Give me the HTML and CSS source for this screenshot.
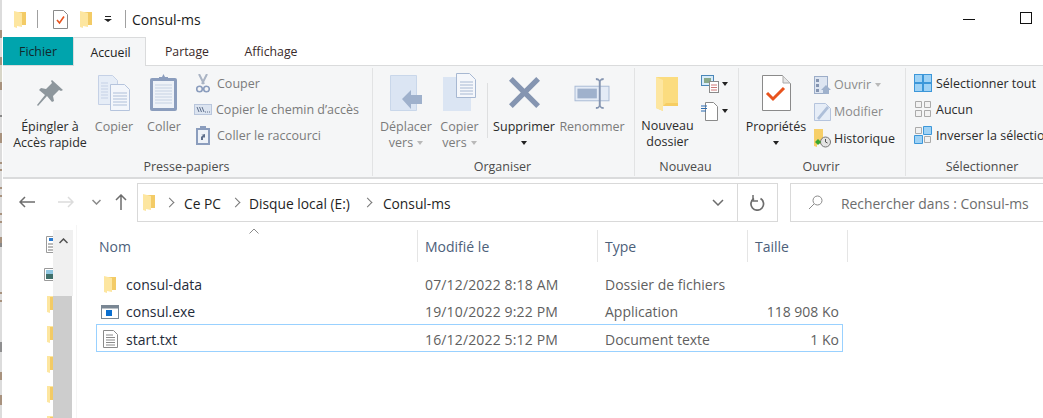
FILE: index.html
```html
<!DOCTYPE html>
<html lang="fr">
<head>
<meta charset="utf-8">
<title>Consul-ms</title>
<link rel="stylesheet" href="styles.css">
</head>
<body>
<div class="window">
  <header class="titlebar">
    <svg class="qa-folder" width="12" height="17" viewBox="0 0 12 17"><path d="M2 1h10v13H2z" fill="#f3cb66"/><path d="M0 0l8 2v14l-5-1v2l-3-1z" fill="#fde6a0"/></svg>
    <i class="qa-sep"></i>
    <svg class="qa-doc" width="15" height="19" viewBox="0 0 15 19"><path d="M.5.5h10l4 4v14H.5z" fill="#fff" stroke="#8a8a8a"/><path d="M4 10l2.500 3L11 6.500" fill="none" stroke="#e8531d" stroke-width="1.600"/></svg>
    <svg class="qa-folder2" width="12" height="17" viewBox="0 0 12 17"><path d="M2 1h10v13H2z" fill="#f3cb66"/><path d="M0 0l8 2v14l-5-1v2l-3-1z" fill="#fde6a0"/></svg>
    <svg class="qa-down" width="8" height="6" viewBox="0 0 8 6"><path d="M1 0h6v1H1zM0 3h8L4 6z" fill="#222"/></svg>
    <i class="qa-sep qa-sep2"></i>
    <span class="title">Consul-ms</span>
    <span class="win-min"></span>
    <span class="win-max"></span>
  </header>

  <nav class="tabs">
    <span class="tab tab-file">Fichier</span>
    <span class="tab tab-active">Accueil</span>
    <span class="tab tab-share">Partage</span>
    <span class="tab tab-view">Affichage</span>
  </nav>

  <section class="ribbon">
    <div class="group g-clip">
      <div class="group-body">
        <div class="big b-pin">
          <svg width="26" height="26" viewBox="0 0 26 26"><path d="M15 0l11 10-2 1-2-1-6 6 1 5-2 1-5-6-9 10-1-1 8-10-6-5 2-2 5 1 6-6-1-2z" fill="#8e979d"/></svg>
          <span class="dark">Épingler à<br>Accès rapide</span>
        </div>
        <div class="big b-copy">
          <svg width="32" height="36" viewBox="0 0 32 36"><path d="M.5.500h14l5 5v24H.5z" fill="#e6edf7" stroke="#c5d1e6"/><path d="M12.500 9.500h14l5 5v21h-19z" fill="#f3f6fb" stroke="#b5c4dd"/><path d="M15 18h14M15 21h14M15 24h14M15 27h14M15 30h14" stroke="#aebfd9"/><path d="M3 8h7M3 11h7M3 14h7M3 17h7M3 20h7M3 23h7" stroke="#c5d1e6"/></svg>
          <span>Copier</span>
        </div>
        <div class="big b-paste">
          <svg width="28" height="37" viewBox="0 0 28 37"><rect x="0" y="4" width="27" height="33" rx="2" fill="#8b9dbd"/><rect x="3" y="7" width="21" height="27" fill="#eef2f8"/><path d="M5 11h17M5 14h17M5 17h17M5 20h17M5 23h17M5 26h17M5 29h17" stroke="#c6d2e3"/><path d="M9 7V3h3l1.500-3L15 3h3v4z" fill="#8b9dbd"/></svg>
          <span>Coller</span>
        </div>
        <ul class="small-list s-clip">
          <li><svg width="14" height="19" viewBox="0 0 14 19"><path d="M3 0l5 10M11 0L6 10" stroke="#aab4c4" stroke-width="2" fill="none"/><circle cx="3.500" cy="15" r="2.800" fill="none" stroke="#8b9dbd" stroke-width="1.600"/><circle cx="10.500" cy="15" r="2.800" fill="none" stroke="#8b9dbd" stroke-width="1.600"/></svg>Couper</li>
          <li><svg width="18" height="11" viewBox="0 0 18 11"><rect x=".5" y=".5" width="17" height="10" fill="#dce4f0" stroke="#b9c6dc"/><path d="M3 3l2 5M5.500 3l2 5M8 3l2 5" stroke="#5e6f8c" fill="none"/><path d="M11 8h1M13 8h1M15 8h1" stroke="#5e6f8c"/></svg>Copier le chemin d’accès</li>
          <li><svg width="14" height="19" viewBox="0 0 14 19"><rect y="2" width="14" height="17" fill="#8b9dbd"/><rect x="2" y="4" width="10" height="13" fill="#eef2f8"/><rect x="4" width="6" height="4" fill="#8b9dbd"/><path d="M5 14v-3l2-2H5l4-1v4l-1-1-1 1v2z" fill="#5e6f8c"/></svg>Coller le raccourci</li>
        </ul>
      </div>
      <div class="group-label">Presse-papiers</div>
    </div>

    <div class="group g-org">
      <div class="group-body">
        <div class="big b-move">
          <svg width="33" height="36" viewBox="0 0 33 36"><path d="M.5.500h26v35H.5z" fill="#dbe5f3" stroke="#c9d7ea"/><path d="M12 24l9-9v5h11v9H21v5z" fill="#9fb1cc"/></svg>
          <span>Déplacer<br>vers<em class="caret-l"></em></span>
        </div>
        <div class="big b-copyto">
          <svg width="33" height="38" viewBox="0 0 33 38"><path d="M0 4h28v34H0z" fill="#dbe5f3"/><path d="M13.500.500h13l6 6v18h-19z" fill="#f5f7fb" stroke="#a7b8d2"/><path d="M17 9h13M17 12h13M17 15h13M17 18h13M17 21h13" stroke="#a7b8d2"/></svg>
          <span>Copier<br>vers<em class="caret-l"></em></span>
        </div>
        <i class="vsep"></i>
        <div class="big b-del">
          <svg width="31" height="31" viewBox="0 0 33 33"><path d="M4 0l12.500 12.500L29 0l4 4-12.500 12.500L33 29l-4 4-12.500-12.500L4 33l-4-4 12.500-12.500L0 4z" fill="#8595b1"/></svg>
          <span class="dark">Supprimer<em class="caret-d block"></em></span>
        </div>
        <div class="big b-ren">
          <svg width="36" height="33" viewBox="0 0 36 34"><rect x=".5" y="9.500" width="35" height="15" fill="#e4ebf6" stroke="#a9bad4"/><rect x="3" y="12" width="20" height="10" fill="#9fb1cc"/><path d="M22 1q3 0 4 2 1-2 4-2v2q-3 0-3 2v24q0 2 3 2v2q-3 0-4-2-1 2-4 2v-2q3 0 3-2V5q0-2-3-2z" fill="#8595b1"/></svg>
          <span>Renommer</span>
        </div>
      </div>
      <div class="group-label">Organiser</div>
    </div>

    <div class="group g-new">
      <div class="group-body">
        <div class="big b-newf">
          <svg width="24" height="35" viewBox="0 0 24 35"><path d="M0 1h22v29H7v5L0 32z" fill="#fbdc7f"/><path d="M22 1v29H7l3-3h12z" fill="#f6cd62"/><path d="M0 1l7 3v31l-7-3z" fill="#fde6a0"/></svg>
          <span class="dark">Nouveau<br>dossier</span>
        </div>
        <div class="mini-col">
          <div class="mini"><svg width="18" height="18" viewBox="0 0 18 18"><rect x=".5" y=".5" width="12" height="10" fill="#d8ecfa" stroke="#4b87b8"/><rect x="3" y="3" width="7" height="5" fill="#8aa98a"/><rect x="8.500" y="6.500" width="9" height="11" fill="#fff" stroke="#8a8a8a"/><path d="M10 10h6M10 12.500h6M10 15h6" stroke="#c77"/></svg><em class="caret-d"></em></div>
          <div class="mini"><svg width="18" height="20" viewBox="0 0 18 20"><path d="M4.500 1.500h8l4 4v14h-12z" fill="#fff" stroke="#8a8a8a"/><path d="M0 5h6M0 7.500h6M0 10h5" stroke="#2a6bb0"/></svg><em class="caret-d"></em></div>
        </div>
      </div>
      <div class="group-label">Nouveau</div>
    </div>

    <div class="group g-open">
      <div class="group-body">
        <div class="big b-prop">
          <svg width="29" height="36" viewBox="0 0 29 36"><path d="M.5.500h20l8 8v27H.5z" fill="#fff" stroke="#8a8a8a"/><path d="M21 1v7h7" fill="#e6e6e6" stroke="#aaa"/><path d="M5 18l6 6 11-11" fill="none" stroke="#e8531d" stroke-width="3"/></svg>
          <span class="dark">Propriétés<em class="caret-d block"></em></span>
        </div>
        <ul class="small-list s-open">
          <li><svg width="17" height="18" viewBox="0 0 17 18"><rect x=".5" y=".5" width="13" height="17" fill="#dde5f1" stroke="#9cadc8"/><path d="M2 3h3v3H2zM2 8h3v3H2zM2 13h3v3H2z" fill="#8595b1"/><path d="M12 9l5 5h-2v4h-6v-4H7z" fill="#9fb1cc"/></svg><span class="muted">Ouvrir<em class="caret-l"></em></span></li>
          <li><svg width="17" height="18" viewBox="0 0 17 18"><path d="M.5.500h11l5 5v12H.5z" fill="#e6edf7" stroke="#b5c4dd"/><path d="M3 15L13 3l2 2L5 17z" fill="#aebfd9"/></svg><span class="muted">Modifier</span></li>
          <li><svg width="17" height="19" viewBox="0 0 17 19"><path d="M0 0h9v15H3v3l-3-1z" fill="#f7cf68"/><circle cx="11.500" cy="13" r="5" fill="#e4e4e4" stroke="#777"/><path d="M11.500 10v3l2 1" fill="none" stroke="#555"/><path d="M1 13l3-3 3 3-3 3z" fill="#3aa62f"/></svg><span class="dark">Historique</span></li>
        </ul>
      </div>
      <div class="group-label">Ouvrir</div>
    </div>

    <div class="group g-sel">
      <div class="group-body">
        <ul class="small-list s-sel">
          <li><svg width="18" height="18" viewBox="0 0 18 18"><rect width="18" height="18" fill="#3c97d9"/><path d="M1 1h7v7H1zM10 1h7v7h-7zM1 10h7v7H1zM10 10h7v7h-7z" fill="#9fd2f5"/></svg><span class="dark">Sélectionner tout</span></li>
          <li><svg width="18" height="18" viewBox="0 0 18 18"><path d="M1.500 1.500h6v6h-6zM10.500 1.500h6v6h-6zM1.500 10.500h6v6h-6zM10.500 10.500h6v6h-6z" fill="#f2f2f2" stroke="#aaa"/></svg><span class="dark">Aucun</span></li>
          <li><svg width="18" height="18" viewBox="0 0 18 18"><path d="M1.500 1.500h6v6h-6zM10.500 10.500h6v6h-6z" fill="#f2f2f2" stroke="#aaa"/><path d="M9.500.500h8v8h-8zM.5 9.500h8v8h-8z" fill="#9fd2f5" stroke="#3c97d9"/></svg><span class="dark">Inverser la sélection</span></li>
        </ul>
      </div>
      <div class="group-label">Sélectionner</div>
    </div>
  </section>

  <div class="addr-row">
    <div class="nav-btns">
      <svg class="n-back" width="16" height="12" viewBox="0 0 16 12"><path d="M16 6H1M6 1L1 6l5 5" fill="none" stroke="#6d6d6d" stroke-width="1.500"/></svg>
      <svg class="n-fwd" width="16" height="12" viewBox="0 0 16 12"><path d="M0 6h15M10 1l5 5-5 5" fill="none" stroke="#dcdcdc" stroke-width="1.500"/></svg>
      <svg class="n-down" width="9" height="6" viewBox="0 0 9 6"><path d="M.5 1l4 4 4-4" fill="none" stroke="#8a8a8a" stroke-width="1.500"/></svg>
      <svg class="n-up" width="12" height="16" viewBox="0 0 12 16"><path d="M6 16V1M1 6l5-5 5 5" fill="none" stroke="#6d6d6d" stroke-width="1.500"/></svg>
    </div>
    <div class="addr">
      <svg class="addr-folder" width="12" height="17" viewBox="0 0 12 17"><path d="M2 1h10v13H2z" fill="#f3cb66"/><path d="M0 0l8 2v14l-5-1v2l-3-1z" fill="#fde6a0"/></svg>
      <span class="chev"></span><span class="crumb">Ce PC</span>
      <span class="chev"></span><span class="crumb c-disk">Disque local (E:)</span>
      <span class="chev"></span><span class="crumb c-last">Consul-ms</span>
      <svg class="addr-drop" width="12" height="7" viewBox="0 0 12 7"><path d="M1 1l5 5 5-5" fill="none" stroke="#6d6d6d" stroke-width="1.500"/></svg>
      <span class="addr-refresh"><svg width="15" height="16" viewBox="0 0 15 16"><path d="M4 3.500A6.300 6.300 0 1 0 10.500 3.500" fill="none" stroke="#6d6d6d" stroke-width="1.700"/><path d="M3 0v6h5" fill="none" stroke="#6d6d6d" stroke-width="1.500"/></svg></span>
    </div>
    <div class="search">
      <svg width="15" height="15" viewBox="0 0 15 15"><circle cx="9.500" cy="5.500" r="4.500" fill="none" stroke="#8a8a8a"/><path d="M6 9l-5 5" stroke="#8a8a8a"/></svg>
      <span class="search-text">Rechercher dans : Consul-ms</span>
    </div>
  </div>

  <div class="main">
    <aside class="nav-pane">
      <div class="nav-icons">
        <svg class="ni ni-doc" width="7" height="17" viewBox="0 0 7 17"><path d="M7 .5H.5v16H7" fill="#fff" stroke="#9a9a9a"/><path d="M2 8h5M2 11h5M2 14h5" stroke="#777"/><path d="M3 2h4v3H3z" fill="#2a7bd0"/></svg>
        <svg class="ni ni-img" width="9" height="13" viewBox="0 0 9 13"><path d="M9 .5H.5v12H9" fill="#fff" stroke="#9a9a9a"/><rect x="2" y="2" width="7" height="9" fill="#3f6f6a"/><rect x="2" y="2" width="7" height="4" fill="#8fc6e0"/></svg>
        <svg class="ni ni-f" width="6" height="17" viewBox="0 0 6 17"><path d="M0 0h6v14H3v3l-3-1z" fill="#fde6a0"/><path d="M3 1h3v13H3z" fill="#f3cb66"/></svg>
        <svg class="ni ni-f" width="6" height="17" viewBox="0 0 6 17"><path d="M0 0h6v14H3v3l-3-1z" fill="#fde6a0"/><path d="M3 1h3v13H3z" fill="#f3cb66"/></svg>
        <svg class="ni ni-f" width="6" height="17" viewBox="0 0 6 17"><path d="M0 0h6v14H3v3l-3-1z" fill="#fde6a0"/><path d="M3 1h3v13H3z" fill="#f3cb66"/></svg>
        <svg class="ni ni-f" width="6" height="17" viewBox="0 0 6 17"><path d="M0 0h6v14H3v3l-3-1z" fill="#fde6a0"/><path d="M3 1h3v13H3z" fill="#f3cb66"/></svg>
        <svg class="ni ni-f" width="6" height="17" viewBox="0 0 6 17"><path d="M0 0h6v14H3v3l-3-1z" fill="#fde6a0"/><path d="M3 1h3v13H3z" fill="#f3cb66"/></svg>
      </div>
      <div class="scrollbar">
        <div class="sb-top"><svg width="9" height="6" viewBox="0 0 9 6"><path d="M.5 5l4-4 4 4" fill="none" stroke="#505050" stroke-width="1.500"/></svg></div>
        <div class="sb-thumb"></div>
      </div>
    </aside>
    <div class="files">
      <div class="file-head">
        <div class="col col-name">Nom<svg class="sort" width="10" height="6" viewBox="0 0 10 6"><path d="M.5 5.500L5 1l4.500 4.500" fill="none" stroke="#8a8a8a"/></svg></div>
        <div class="col">Modifié le</div>
        <div class="col">Type</div>
        <div class="col">Taille</div>
      </div>
      <div class="file-row">
        <div class="name"><span class="ficon"><svg width="12" height="17" viewBox="0 0 12 17"><path d="M2 1h10v13H2z" fill="#f3cb66"/><path d="M0 0l8 2v14l-5-1v2l-3-1z" fill="#fde6a0"/></svg></span>consul-data</div>
        <div class="meta date">07/12/2022 8:18 AM</div>
        <div class="meta">Dossier de fichiers</div>
        <div class="size"></div>
      </div>
      <div class="file-row">
        <div class="name"><span class="ficon"><svg width="18" height="14" viewBox="0 0 18 14"><rect x=".5" y=".5" width="17" height="13" fill="#fff" stroke="#7a8794"/><rect x="1" y="1" width="16" height="2.500" fill="#7a8794"/><rect x="5" y="5" width="6" height="6" fill="#0a6fd0"/></svg></span>consul.exe</div>
        <div class="meta date">19/10/2022 9:22 PM</div>
        <div class="meta">Application</div>
        <div class="size">118 908 Ko</div>
      </div>
      <div class="file-row selected">
        <div class="name"><span class="ficon"><svg width="15" height="18" viewBox="0 0 15 18"><path d="M.5.500h10l4 4v13H.5z" fill="#fff" stroke="#8a8a8a"/><path d="M3 5h7M3 7.500h9M3 10h9M3 12.500h9M3 15h9" stroke="#8a8a8a"/></svg></span>start.txt</div>
        <div class="meta date">16/12/2022 5:12 PM</div>
        <div class="meta">Document texte</div>
        <div class="size">1 Ko</div>
      </div>
    </div>
  </div>
</div>
</body>
</html>
```

FILE: styles.css
```css
* { box-sizing: border-box; }
html, body { margin: 0; height: 100%; overflow: hidden; background: #fff; }
body { font-family: "Open Sans", "Noto Sans", sans-serif; color: #1f1f1f; }
svg { display: block; flex: none; }
ul { list-style: none; margin: 0; padding: 0; }
em { font-style: normal; }

.window {
  width: 1043px; height: 418px; padding-left: 3px; display: flex; flex-direction: column; overflow: hidden;
  background-color: #fff;
  background-image: linear-gradient(to bottom,
    #dcdcdc 0 30px, #a8927e 30px 38px, #dcdcdc 38px 57px, #a8927e 57px 65px, #d8d6c8 65px 82px, #a8927e 82px 90px,
    #dcdcdc 90px 115px, #888 115px 117px, #dcdcdc 117px 133px, #a8927e 133px 143px, #dcdcdc 143px 162px, #a8927e 162px 164px,
    #dcdcdc 164px 169px, #a8927e 169px 171px, #dcdcdc 171px 187px, #a8927e 187px 189px, #dcdcdc 189px 195px, #a8927e 195px 197px,
    #dcdcdc 197px 213px, #a8927e 213px 215px, #dcdcdc 215px 221px, #a8927e 221px 223px, #dcdcdc 223px 237px, #a8927e 237px 243px,
    #888 243px 247px, #dcdcdc 247px 292px, #a8927e 292px 294px, #dcdcdc 294px 300px, #a8927e 300px 302px, #dcdcdc 302px 342px,
    #8f8f90 342px 352px, #dcdcdc 352px 372px, #a8927e 372px 380px, #dcdcdc 380px 395px, #a8927e 395px 405px, #dcdcdc 405px);
  background-size: 2px 100%;
  background-repeat: no-repeat;
}

.titlebar { height: 37px; flex: none; display: flex; align-items: center; padding-left: 11px; padding-top: 1px; }
.qa-sep { width: 1px; height: 18px; background: #a0a0a0; margin-left: 11px; }
.qa-doc { margin-left: 15px; }
.qa-folder2 { margin-left: 12px; }
.qa-down { margin-left: 12px; }
.qa-sep2 { margin-left: 13px; }
.title { font-size: 14px; margin-left: 6px; color: #1a1a1a; }
.win-min { width: 12px; height: 1px; background: #111; margin-left: auto; }
.win-max { width: 12px; height: 12px; border: 1px solid #111; margin-left: 45px; margin-right: 11px; margin-bottom: 2px; }

.tabs { height: 29px; flex: none; display: flex; border-bottom: 1px solid #dadbdc; font-size: 12.3px; }
.tab { display: flex; align-items: center; justify-content: center; height: 28px; color: #3a2a2a; }
.tab-file { width: 70px; background: #00a4ad; color: #12282c; }
.tab-active { width: 73px; height: 29px; background: #f5f6f7; border: 1px solid #dadbdc; border-bottom: 0; color: #222; padding-left: 2px; }
.tab-share { width: 82px; }
.tab-view { width: 86px; }

.ribbon { height: 113px; flex: none; display: flex; background: #f5f6f7; border-bottom: 2px solid #dadbdc; font-size: 12.5px; color: #7b7b7b; padding-top: 2px; }
.group { display: flex; flex-direction: column; border-right: 1px solid #e2e3e4; height: 108px; flex: none; }
.group:last-child { border-right: 0; }
.group-body { height: 90px; display: flex; flex: none; }
.group-label { height: 18px; text-align: center; color: #4b4b4b; font-size: 12.5px; line-height: 18px; padding-right: 2px; }
.g-clip { width: 370px; }
.g-org { width: 262px; }
.g-new { width: 104px; }
.g-open { width: 167px; }
.g-sel { width: 154px; }

.big { display: flex; flex-direction: column; align-items: center; text-align: center; line-height: 16px; flex: none; }
.big svg { margin-bottom: 6px; }
.big span { display: block; white-space: nowrap; }
.dark { color: #2b2b2b; }
.muted { color: #8b8b8b; }

.b-pin { width: 92px; padding-top: 12px; margin-left: 1px; }
.b-pin svg { margin-bottom: 13px; }
.b-copy { width: 50px; padding-top: 7px; margin-left: -7px; }
.b-copy svg { margin-bottom: 8px; }
.b-paste { width: 50px; padding-top: 6px; }
.b-paste svg { margin-bottom: 8px; }

.small-list { display: flex; flex-direction: column; padding-top: 2px; }
.small-list li { height: 26px; display: flex; align-items: center; gap: 6px; white-space: nowrap; }
.s-clip { margin-left: 5px; }
.s-clip li:nth-child(1) { gap: 7px; padding-left: 2px; }
.s-clip li:nth-child(2) { gap: 4px; }
.s-clip li:nth-child(3) { gap: 7px; padding-left: 2px; }

.b-move { width: 64px; margin-left: 1px; padding-top: 7px; }
.b-move svg { margin-bottom: 8px; }
.b-copyto { width: 45px; padding-top: 5px; margin-left: -1px; }
.b-copyto svg { margin-bottom: 8px; }
.vsep { width: 1px; height: 55px; background: #dedfe0; margin: 15px 0 0 5px; flex: none; }
.b-del { width: 68px; padding-top: 9px; margin-left: 2px; }
.b-del svg { margin-bottom: 11px; }
.b-ren { width: 68px; padding-top: 9px; }
.b-ren svg { margin-bottom: 9px; }
.caret-l { display: inline-block; border: 3px solid transparent; border-top: 4px solid #b9b9b9; border-bottom: 0; margin-left: 4px; vertical-align: 2px; }
.caret-d { display: inline-block; border: 3px solid transparent; border-top: 4px solid #222; border-bottom: 0; }
.caret-d.block { display: block; width: 0; margin: 6px auto 0; }

.b-newf { width: 65px; padding-top: 8px; }
.b-newf svg { margin-bottom: 7px; }
.mini-col { display: flex; flex-direction: column; gap: 6px; padding-top: 5px; margin-left: 1px; }
.mini { display: flex; align-items: center; gap: 3px; height: 21px; }

.b-prop { width: 74px; padding-top: 7px; margin-right: 1px; }
.b-prop svg { margin-bottom: 8px; }
.s-open { padding-top: 3px; }
.s-open li { height: 27px; gap: 3px; }
.s-sel { padding-top: 2px; margin-left: 8px; }
.s-sel li { gap: 4px; height: 26px; }

.addr-row { height: 46px; flex: none; display: flex; padding-top: 4px; }
.nav-btns { width: 134px; height: 38px; display: flex; align-items: center; flex: none; }
.n-back { margin-left: 16px; }
.n-fwd { margin-left: 23px; }
.n-down { margin-left: 18px; }
.n-up { margin-left: 14px; }
.addr { width: 641px; height: 39px; border: 1px solid #d9d9d9; display: flex; align-items: center; font-size: 13.8px; flex: none; }
.addr-folder { margin-left: 5px; }
.chev { width: 7px; height: 7px; border-top: 1.500px solid #777; border-right: 1.500px solid #777; transform: rotate(45deg); margin-left: 11px; flex: none; }
.crumb { margin-left: 11px; color: #1f1f1f; padding-top: 2px; }
.c-disk { margin-left: 10px; margin-right: 3px; }
.c-last { margin-left: 12px; }
.addr-drop { margin-left: auto; margin-right: 13px; }
.addr-refresh { width: 40px; height: 37px; border-left: 1px solid #d9d9d9; display: flex; align-items: center; justify-content: center; }
.search { margin-left: 12px; flex: 1; height: 39px; border: 1px solid #d9d9d9; border-right: 0; display: flex; align-items: center; font-size: 13.9px; color: #6d6d6d; padding-left: 17px; gap: 18px; }
.search-text { padding-top: 2px; }

.main { flex: 1; min-height: 0; display: flex; }
.nav-pane { width: 73px; flex: none; display: flex; justify-content: flex-end; padding-top: 5px; padding-right: 3px; }
.nav-icons { display: flex; flex-direction: column; align-items: flex-end; padding-top: 6px; }
.ni-img { margin-top: 15px; }
.ni-f { margin-top: 13px; flex: none; }
.ni-img + .ni-f { margin-top: 15px; }
.scrollbar { width: 20px; display: flex; flex-direction: column; flex: none; }
.sb-top { height: 66px; background: #f0f0f0; display: flex; justify-content: center; padding-top: 8px; }
.sb-thumb { flex: 1; background: #cdcdcd; margin-right: 1px; }

.files { flex: 1; padding-left: 19px; padding-top: 5px; font-size: 14px; border-left: 1px solid #f5f5f5; }
.file-head { display: grid; grid-template-columns: 322px 180px 150px 100px; width: 752px; height: 32px; margin-bottom: 8px; color: #4c607a; }
.col { display: flex; align-items: center; padding-left: 7px; border-right: 1px solid #e5e5e5; position: relative; }
.col-name { padding-left: 3px; }
.sort { position: absolute; left: 153px; top: -2px; }
.file-row { display: grid; height: 27px; padding-top: 2px; align-items: center; border: 1px solid transparent; width: 747px; grid-template-columns: 320px 180px 150px 95px; color: #1f1f1f; }
.file-row.selected { border-color: #99d1ff; height: 28px; }
.name { display: flex; align-items: center; color: #1f2b3a; }
.ficon { width: 29px; display: flex; justify-content: center; flex: none; padding-right: 3px; }
.meta { padding-left: 8px; color: #5f5f5f; }
.date { letter-spacing: .15px; }
.size { text-align: right; padding-right: 3px; color: #5f5f5f; }
```
